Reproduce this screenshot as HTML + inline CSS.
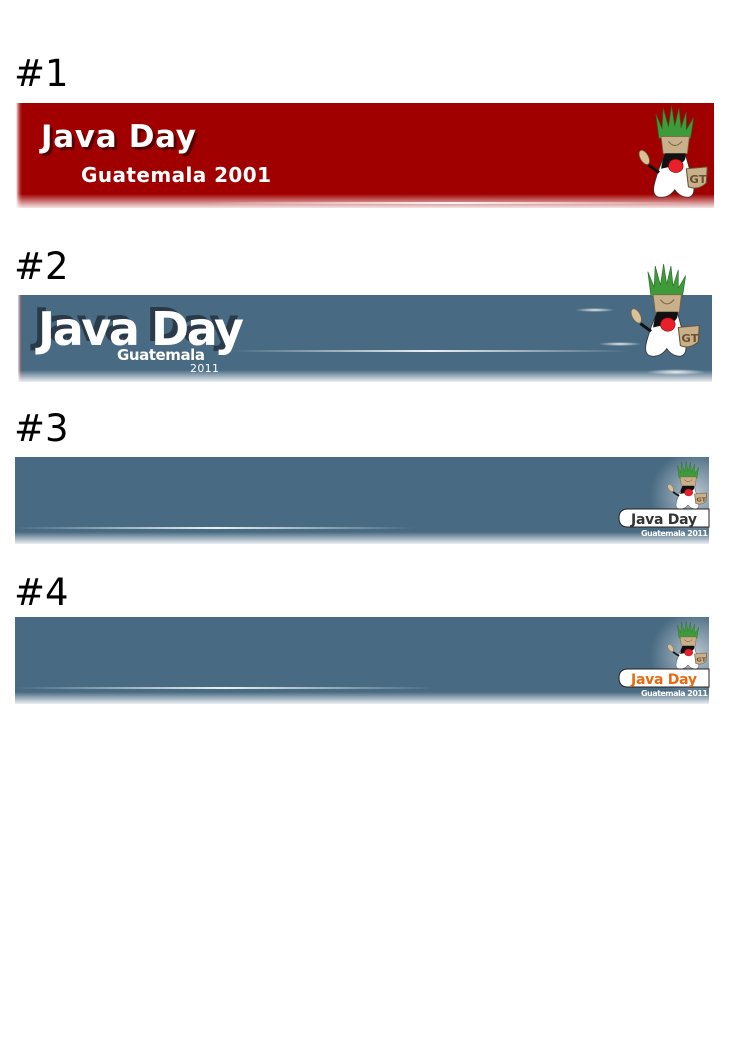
<!DOCTYPE html>
<html><head><meta charset="utf-8"><style>
html,body{margin:0;padding:0;background:#fff;width:744px;height:1052px;overflow:hidden}
svg{position:absolute;left:0;top:0}
</style></head><body>
<svg width="744" height="1052" viewBox="0 0 744 1052" font-family="DejaVu Sans, sans-serif">
<defs>
<linearGradient id="redL" x1="0" x2="1"><stop offset="0" stop-color="#fff"/><stop offset="0.5" stop-color="#a00000" stop-opacity="0"/></linearGradient>
<linearGradient id="bot" x1="0" y1="0" x2="0" y2="1"><stop offset="0" stop-color="#fff" stop-opacity="0"/><stop offset="1" stop-color="#fff" stop-opacity="0.9"/></linearGradient>
<linearGradient id="line" x1="0" x2="1"><stop offset="0" stop-color="#fff" stop-opacity="0"/><stop offset="0.5" stop-color="#fff" stop-opacity="0.9"/><stop offset="1" stop-color="#fff" stop-opacity="0"/></linearGradient>
<radialGradient id="glow" cx="0.5" cy="0.5" r="0.5"><stop offset="0" stop-color="#fff" stop-opacity="0.9"/><stop offset="1" stop-color="#fff" stop-opacity="0"/></radialGradient>
<g id="duke">
  <path d="M20 32 L17 6 L23 22 L24 0 L29 20 L32 -2 L35 19 L39 0 L41 21 L46 4 L46 23 L53 10 L50 32 Z" fill="#3f9a3a" stroke="#2a6a2a" stroke-width="0.6"/>
  <path d="M22 30 L49 30 L47 48 L24 48 Z" fill="#c8b08a" stroke="#7a6040" stroke-width="0.8"/>
  <path d="M29 35 Q35 44 42 35" fill="none" stroke="#7a6040" stroke-width="1"/>
  <path d="M26 48 Q20 62 16 78 Q12 94 22 94 Q30 94 35 86 Q40 94 48 94 Q56 92 52 76 Q48 60 45 48 Z" fill="#fff" stroke="#333" stroke-width="0.8"/>
  <path d="M26 48 L45 48 Q47 56 38 60 Q30 62 22 64 Q23 54 26 48 Z" fill="#111"/>
  <circle cx="36" cy="61" r="7" fill="#e8202a" stroke="#900" stroke-width="0.6"/>
  <path d="M20 68 L10 60" stroke="#111" stroke-width="3"/>
  <ellipse cx="6" cy="52" rx="4" ry="8" fill="#d8c098" stroke="#7a6040" stroke-width="0.7" transform="rotate(-25 6 52)"/>
  <path d="M46 64 L66 62 L65 79 Q57 87 48 83 Z" fill="#c8b08a" stroke="#6a5030" stroke-width="1"/>
  <text x="49" y="79" font-size="11" font-weight="bold" fill="#6a5030">GT</text>
</g>
</defs>

<text x="14" y="86" font-size="37" fill="#000">#1</text>
<rect x="16" y="103" width="698" height="105" fill="#a00000"/>
<rect x="16" y="103" width="14" height="105" fill="url(#redL)"/>
<rect x="16" y="194" width="698" height="14" fill="url(#bot)"/>
<rect x="200" y="202" width="500" height="2" fill="url(#line)"/>
<text x="44" y="150" font-size="31" font-weight="bold" fill="#5a0000" textLength="155">Java Day</text>
<text x="41" y="147" font-size="31" font-weight="bold" fill="#fff" textLength="155">Java Day</text>
<text x="81" y="182" font-size="20" font-weight="bold" fill="#fff" textLength="190">Guatemala 2001</text>
<use href="#duke" transform="translate(638 108) scale(1.05 0.95)"/>

<text x="14" y="279" font-size="37" fill="#000">#2</text>
<rect x="18" y="295" width="694" height="87" fill="#486a82"/>
<rect x="18" y="295" width="10" height="87" fill="url(#redL)" opacity="0.8"/>
<rect x="18" y="370" width="694" height="12" fill="url(#bot)"/>
<rect x="230" y="350" width="400" height="2" fill="url(#line)"/>
<ellipse cx="595" cy="310" rx="20" ry="2" fill="url(#glow)"/>
<ellipse cx="620" cy="344" rx="22" ry="2" fill="url(#glow)"/>
<ellipse cx="676" cy="372" rx="30" ry="3" fill="url(#glow)"/>
<text x="33" y="341" font-size="46" font-weight="bold" fill="#2a3a48" textLength="206">Java Day</text>
<text x="38" y="345" font-size="46" font-weight="bold" fill="#fff" textLength="206">Java Day</text>
<text x="117" y="360" font-size="15" font-weight="bold" fill="#fff" textLength="88">Guatemala</text>
<text x="190" y="372" font-size="11" fill="#fff" textLength="29">2011</text>
<use href="#duke" transform="translate(630 266) scale(1.05 0.96)"/>

<text x="14" y="441" font-size="37" fill="#000">#3</text>
<rect x="15" y="457" width="694" height="87" fill="#486a82"/>
<rect x="15" y="532" width="694" height="12" fill="url(#bot)"/>
<rect x="15" y="527" width="400" height="2" fill="url(#line)"/>
<ellipse cx="695" cy="495" rx="45" ry="45" fill="url(#glow)" opacity="0.7"/>
<use href="#duke" transform="translate(667 462) scale(0.6 0.5)"/>
<path d="M628 509 L709 509 L709 527 L628 527 Q619 527 619 518 Q619 509 628 509 Z" fill="#fff" stroke="#222" stroke-width="1"/>
<text x="631" y="524" font-size="14" font-weight="bold" fill="#333" textLength="66">Java Day</text>
<text x="641" y="536" font-size="8" font-weight="bold" fill="#fff" textLength="67">Guatemala 2011</text>

<text x="14" y="605" font-size="37" fill="#000">#4</text>
<rect x="15" y="617" width="694" height="87" fill="#486a82"/>
<rect x="15" y="692" width="694" height="12" fill="url(#bot)"/>
<rect x="15" y="687" width="420" height="2" fill="url(#line)"/>
<ellipse cx="695" cy="655" rx="45" ry="45" fill="url(#glow)" opacity="0.7"/>
<use href="#duke" transform="translate(667 622) scale(0.6 0.5)"/>
<path d="M628 669 L709 669 L709 687 L628 687 Q619 687 619 678 Q619 669 628 669 Z" fill="#fff" stroke="#222" stroke-width="1"/>
<text x="631" y="684" font-size="14" font-weight="bold" fill="#e86a10" textLength="66">Java Day</text>
<text x="641" y="696" font-size="8" font-weight="bold" fill="#fff" textLength="67">Guatemala 2011</text>
</svg>
</body></html>
